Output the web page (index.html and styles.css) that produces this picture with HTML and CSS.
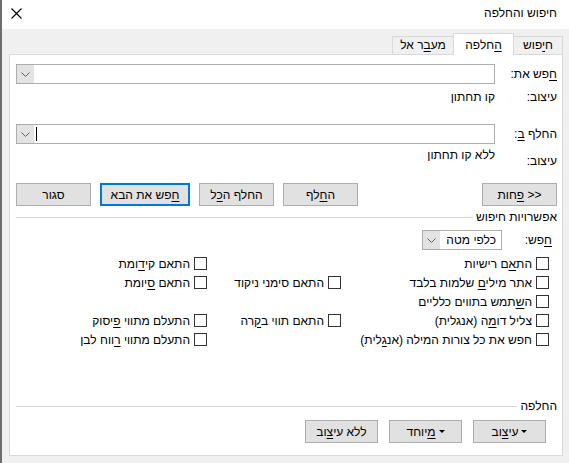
FILE: index.html
```html
<!DOCTYPE html>
<html lang="he" dir="rtl">
<head>
<meta charset="utf-8">
<title>חיפוש והחלפה</title>
<link rel="stylesheet" href="styles.css">
</head>
<body>
<div class="window">
  <div class="titlebar">
    <span class="title">חיפוש והחלפה</span>
    <svg class="close" width="11" height="11" viewBox="0 0 11 11"><path d="M0.5 0.5 L10.5 10.5 M10.5 0.5 L0.5 10.5" stroke="#000" stroke-width="1.1" fill="none"/></svg>
  </div>
  <div class="tabs">
    <div class="tab t1"><span>ח<u>י</u>פוש</span></div>
    <div class="tab t2 active"><span><u>ה</u>חלפה</span></div>
    <div class="tab t3"><span>מע<u>ב</u>ר אל</span></div>
  </div>
  <div class="panel">
    <div class="field-row find-row">
      <div class="label"><u>ח</u>פש את:</div>
      <div class="combo">
        <div class="arrow"><svg width="9" height="5" viewBox="0 0 9 5"><polyline points="0.5,0.5 4.5,4.5 8.5,0.5" fill="none" stroke="#606060" stroke-width="1"/></svg></div>
        <div class="combo-text"></div>
      </div>
    </div>
    <div class="fmt-row fmt1">
      <div class="label">עיצוב:</div>
      <div class="value">קו תחתון</div>
    </div>
    <div class="field-row replace-row">
      <div class="label">החלף <u>ב</u>:</div>
      <div class="combo">
        <div class="arrow"><svg width="9" height="5" viewBox="0 0 9 5"><polyline points="0.5,0.5 4.5,4.5 8.5,0.5" fill="none" stroke="#606060" stroke-width="1"/></svg></div>
        <div class="combo-text"><span class="caret"></span></div>
      </div>
    </div>
    <div class="fmt-row fmt2">
      <div class="label low">עיצוב:</div>
      <div class="value">ללא קו תחתון</div>
    </div>
    <div class="button-row">
      <button class="btn"><span>&lt;&lt; <u>פ</u>חות</span></button>
      <div class="btn-group">
        <button class="btn"><span>ה<u>ח</u>לף</span></button>
        <button class="btn"><span>החלף ה<u>כ</u>ל</span></button>
        <button class="btn default"><span><u>ח</u>פש את הבא</span></button>
        <button class="btn"><span>סגור</span></button>
      </div>
    </div>
    <div class="separator sep1"><span>אפשרויות חיפוש</span><div class="line"></div></div>
    <div class="select-row">
      <div class="sel-label"><u>ח</u>פש:</div>
      <div class="combo select">
        <div class="arrow"><svg width="9" height="5" viewBox="0 0 9 5"><polyline points="0.5,0.5 4.5,4.5 8.5,0.5" fill="none" stroke="#606060" stroke-width="1"/></svg></div>
        <div class="combo-text sel-text"><span>כלפי מטה</span></div>
      </div>
    </div>
    <div class="checks">
      <label class="chk c1 r1"><span class="box"></span><span>הת<u>א</u>ם רישיות</span></label>
      <label class="chk c3 r1"><span class="box"></span><span>התאם קי<u>ד</u>ומת</span></label>
      <label class="chk c1 r2"><span class="box"></span><span>אתר מילי<u>ם</u> שלמות בלבד</span></label>
      <label class="chk c2 r2"><span class="box"></span><span>התאם סימני ניקוד</span></label>
      <label class="chk c3 r2"><span class="box"></span><span>התאם <u>ס</u>יומת</span></label>
      <label class="chk c1 r3"><span class="box"></span><span>ה<u>ש</u>תמש בתווים כלליים</span></label>
      <label class="chk c1 r4"><span class="box"></span><span>צליל דו<u>מ</u>ה (אנגלית)</span></label>
      <label class="chk c2 r4"><span class="box"></span><span>התאם תווי ב<u>ק</u>רה</span></label>
      <label class="chk c3 r4"><span class="box"></span><span>התעלם מתווי <u>פ</u>יסוק</span></label>
      <label class="chk c1 r5"><span class="box"></span><span>חפש את כל צורות המילה (אנ<u>ג</u>לית)</span></label>
      <label class="chk c3 r5"><span class="box"></span><span>התעלם מתווי <u>ר</u>ווח לבן</span></label>
    </div>
    <div class="separator sep2"><span>החלפה</span><div class="line"></div></div>
    <div class="bottom-row">
      <button class="btn small"><span class="tri"></span><span>עי<u>צ</u>וב</span></button>
      <button class="btn small"><span class="tri"></span><span><u>מ</u>יוחד</span></button>
      <button class="btn small"><span>ללא עי<u>צ</u>וב</span></button>
    </div>
  </div>
</div>
</body>
</html>
```

FILE: styles.css
```css
* { box-sizing: border-box; }
html, body { margin: 0; padding: 0; }
body {
  font-family: "Liberation Sans", "DejaVu Sans", sans-serif;
  font-size: 12px;
  color: #000;
  background: #f0f0f0;
}
u { text-underline-offset: 2px; }

.window {
  width: 569px;
  height: 463px;
  background: #f0f0f0;
  border-left: 2px solid #6e6e6e;
  display: flex;
  flex-direction: column;
  overflow: hidden;
}

.titlebar {
  height: 29px;
  flex: none;
  background: #fff;
  display: flex;
  align-items: center;
  justify-content: space-between;
  padding: 0 12px 3px 9px;
}
.close { display: block; }

.tabs {
  height: 25px;
  flex: none;
  display: flex;
  align-items: flex-end;
  padding-right: 6px;
}
.tab {
  height: 18px;
  border: 1px solid #d9d9d9;
  border-bottom: none;
  background: #f0f0f0;
  display: flex;
  align-items: center;
  justify-content: center;
  padding-bottom: 1px;
}
.t1 { width: 50px; }
.t2 { width: 61px; margin-right: -1px; }
.t3 { width: 62px; margin-right: -1px; }
.tab.active {
  height: 22px;
  background: #fff;
  margin-bottom: -1px;
  position: relative;
  z-index: 1;
  padding-bottom: 0;
  padding-top: 1px;
}

.panel {
  height: 402px;
  flex: none;
  margin: 0 6px 0 7px;
  background: #fff;
  border: 1px solid #d9d9d9;
  padding: 0 5px 0 6px;
  display: flex;
  flex-direction: column;
}

.field-row {
  display: flex;
  align-items: center;
  height: 20px;
}
.find-row { margin-top: 9px; }
.replace-row { margin-top: 20px; }
.label { width: 62px; flex: none; white-space: nowrap; }

.combo {
  direction: ltr;
  flex: 1;
  height: 20px;
  border: 1px solid #adadad;
  background: #fff;
  display: flex;
}
.arrow {
  width: 17px;
  flex: none;
  background: #e3e3e3;
  display: flex;
  align-items: center;
  justify-content: center;
}
.arrow svg { display: block; }
.combo-text {
  flex: 1;
  display: flex;
  align-items: center;
  padding-left: 2px;
}
.caret {
  display: block;
  width: 1px;
  height: 14px;
  background: #000;
}

.fmt-row {
  display: flex;
  align-items: flex-start;
  line-height: 14px;
}
.fmt1 { margin-top: 6px; }
.fmt2 { margin-top: 4px; }
.label.low { margin-top: 6px; }

.button-row {
  display: flex;
  margin-top: 15px;
}
.btn-group {
  display: flex;
  gap: 9px;
  margin-right: auto;
}
.btn {
  font-family: inherit;
  font-size: 12px;
  color: #000;
  height: 23px;
  width: 75px;
  background: #e1e1e1;
  border: 1px solid #adadad;
  padding: 0;
  margin: 0;
  display: flex;
  align-items: center;
  justify-content: center;
  white-space: nowrap;
  direction: rtl;
}
.btn.default {
  width: 90px;
  border: 2px solid #0078d7;
}

.separator {
  display: flex;
  align-items: center;
  height: 14px;
  gap: 3px;
}
.separator .line {
  flex: 1;
  height: 1px;
  background: #d5d5d5;
}
.sep1 { margin-top: 4px; }
.sep2 { margin-top: 50px; }

.select-row {
  display: flex;
  align-items: center;
  margin-top: 6px;
  padding-right: 5px;
}
.sel-label { width: 50px; flex: none; }
.combo.select { flex: none; width: 80px; }
.sel-text { justify-content: flex-end; padding-right: 5px; }
.sel-text span { direction: rtl; }

.checks {
  margin-top: 4px;
  padding-right: 8px;
  display: grid;
  grid-template-columns: 208px 134px 1fr;
  grid-template-rows: repeat(5, 19px);
}
.chk {
  display: flex;
  align-items: center;
  gap: 4px;
  white-space: nowrap;
}
.box {
  width: 13px;
  height: 13px;
  border: 1px solid #333;
  background: #fff;
  flex: none;
}
.c1 { grid-column: 1; }
.c2 { grid-column: 2; }
.c3 { grid-column: 3; }
.r1 { grid-row: 1; }
.r2 { grid-row: 2; }
.r3 { grid-row: 3; }
.r4 { grid-row: 4; }
.r5 { grid-row: 5; }

.bottom-row {
  display: flex;
  gap: 11px;
  margin-top: 7px;
  padding-right: 11px;
}
.btn.small { width: 73px; gap: 3px; }
.tri {
  width: 0;
  height: 0;
  border-left: 3px solid transparent;
  border-right: 3px solid transparent;
  border-top: 3px solid #000;
}
```
